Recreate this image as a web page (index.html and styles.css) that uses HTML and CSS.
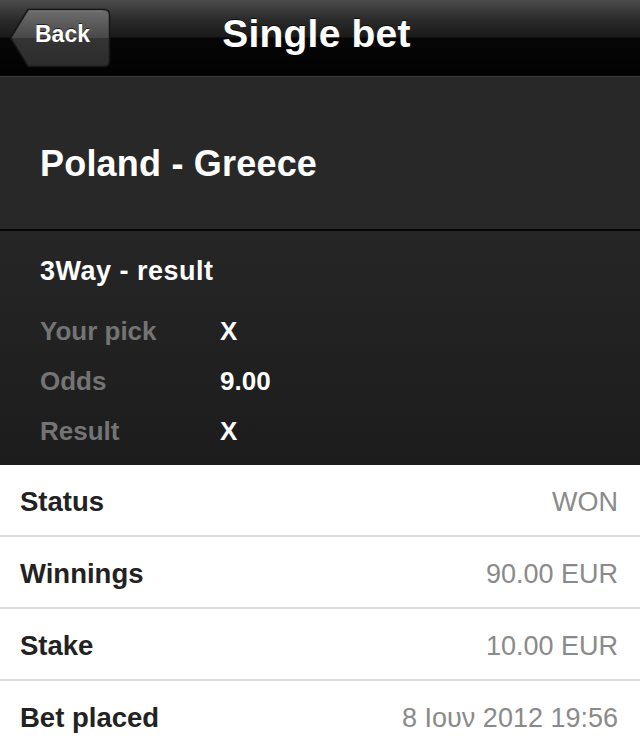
FILE: index.html
```html
<!DOCTYPE html>
<html>
<head>
<meta charset="utf-8">
<link rel="stylesheet" href="styles.css">
</head>
<body>
<div class="nav">
  <div class="nav-left">
    <div class="back">
      <svg class="back-bg" width="101" height="60" viewBox="0 0 101 60">
        <defs>
          <linearGradient id="bg" x1="0" y1="0" x2="0" y2="1">
            <stop offset="0" stop-color="#6e6e6e"/>
            <stop offset="0.5" stop-color="#484848"/>
            <stop offset="0.5" stop-color="#343434"/>
            <stop offset="1" stop-color="#2c2c2c"/>
          </linearGradient>
        </defs>
        <path d="M18 1.5 H94 Q99.5 1.5 99.5 7 V53 Q99.5 58.5 94 58.5 H18 L1.2 31 Q0.5 30 1.2 29 Z" fill="url(#bg)" stroke="#161616" stroke-width="1.5"/>
        <path d="M19 3 H93" stroke="#8a8a8a" stroke-width="1" opacity="0.6"/>
      </svg>
      <span class="back-label">Back</span>
    </div>
  </div>
  <div class="nav-title">Single bet</div>
  <div></div>
</div>

<div class="match">
  <h1 class="match-title">Poland - Greece</h1>
</div>

<div class="market">
  <div class="market-title">3Way - result</div>
  <div class="pick-grid">
    <div class="pick-label">Your pick</div><div class="pick-value">X</div>
    <div class="pick-label">Odds</div><div class="pick-value">9.00</div>
    <div class="pick-label">Result</div><div class="pick-value">X</div>
  </div>
</div>

<div class="details">
  <div class="row"><span class="row-label">Status</span><span class="row-value">WON</span></div>
  <div class="row"><span class="row-label">Winnings</span><span class="row-value">90.00 EUR</span></div>
  <div class="row"><span class="row-label">Stake</span><span class="row-value">10.00 EUR</span></div>
  <div class="row"><span class="row-label">Bet placed</span><span class="row-value">8 Ιουν 2012 19:56</span></div>
</div>
</body>
</html>
```

FILE: styles.css
```css
* { box-sizing: border-box; }
html, body { margin: 0; padding: 0; }
body {
  width: 640px;
  height: 747px;
  overflow: hidden;
  background: #ffffff;
  font-family: "Liberation Sans", Arial, Helvetica, sans-serif;
}

.nav {
  height: 77px;
  display: grid;
  grid-template-columns: 1fr auto 1fr;
  align-items: center;
  background: linear-gradient(to bottom, #4b4b4b 0px, #2a2a2a 20px, #1a1a1a 37px, #060606 38px, #020202 76px);
  border-bottom: 1px solid #3d3d3d;
}
.nav-left { padding-left: 10px; display: flex; }
.back {
  position: relative;
  width: 101px;
  height: 60px;
  display: flex;
  align-items: center;
  padding-left: 25px;
  padding-bottom: 6px;
  margin-top: -1px;
}
.back-bg { position: absolute; left: 0; top: 0; }
.back-label {
  position: relative;
  color: #fff;
  font-weight: bold;
  font-size: 23px;
  text-shadow: 0 -1px 0 rgba(0,0,0,0.6);
}
.nav-title {
  color: #fff;
  font-weight: bold;
  font-size: 39px;
  letter-spacing: 0.2px;
  text-shadow: 0 -1px 0 rgba(0,0,0,0.7);
  margin-top: -9px;
  margin-right: 7px;
}

.match {
  height: 154px;
  background: #282828;
  display: flex;
  align-items: center;
  padding-left: 40px;
  border-bottom: 2px solid #060606;
}
.match-title {
  margin: 0;
  color: #fff;
  font-weight: bold;
  font-size: 36px;
  letter-spacing: 0.2px;
  padding-top: 22px;
}

.market {
  height: 234px;
  background: linear-gradient(to bottom, #262626, #1c1c1c);
  padding: 24px 40px 0 40px;
}
.market-title {
  color: #fff;
  font-weight: bold;
  font-size: 27px;
  letter-spacing: 0.5px;
  line-height: 32px;
}
.pick-grid {
  margin-top: 19px;
  display: grid;
  grid-template-columns: 180px auto;
  grid-auto-rows: 50px;
  align-items: center;
}
.pick-label {
  color: #747474;
  font-weight: bold;
  font-size: 26px;
}
.pick-value {
  color: #fff;
  font-weight: bold;
  font-size: 26px;
}

.details { background: #fff; }
.row {
  height: 72px;
  display: flex;
  justify-content: space-between;
  align-items: center;
  padding: 4px 22px 0 20px;
  border-bottom: 2px solid #dcdcdc;
}
.row-label {
  color: #222;
  font-weight: bold;
  font-size: 27.5px;
}
.row-value {
  color: #8a8a8a;
  font-size: 27px;
}
```
